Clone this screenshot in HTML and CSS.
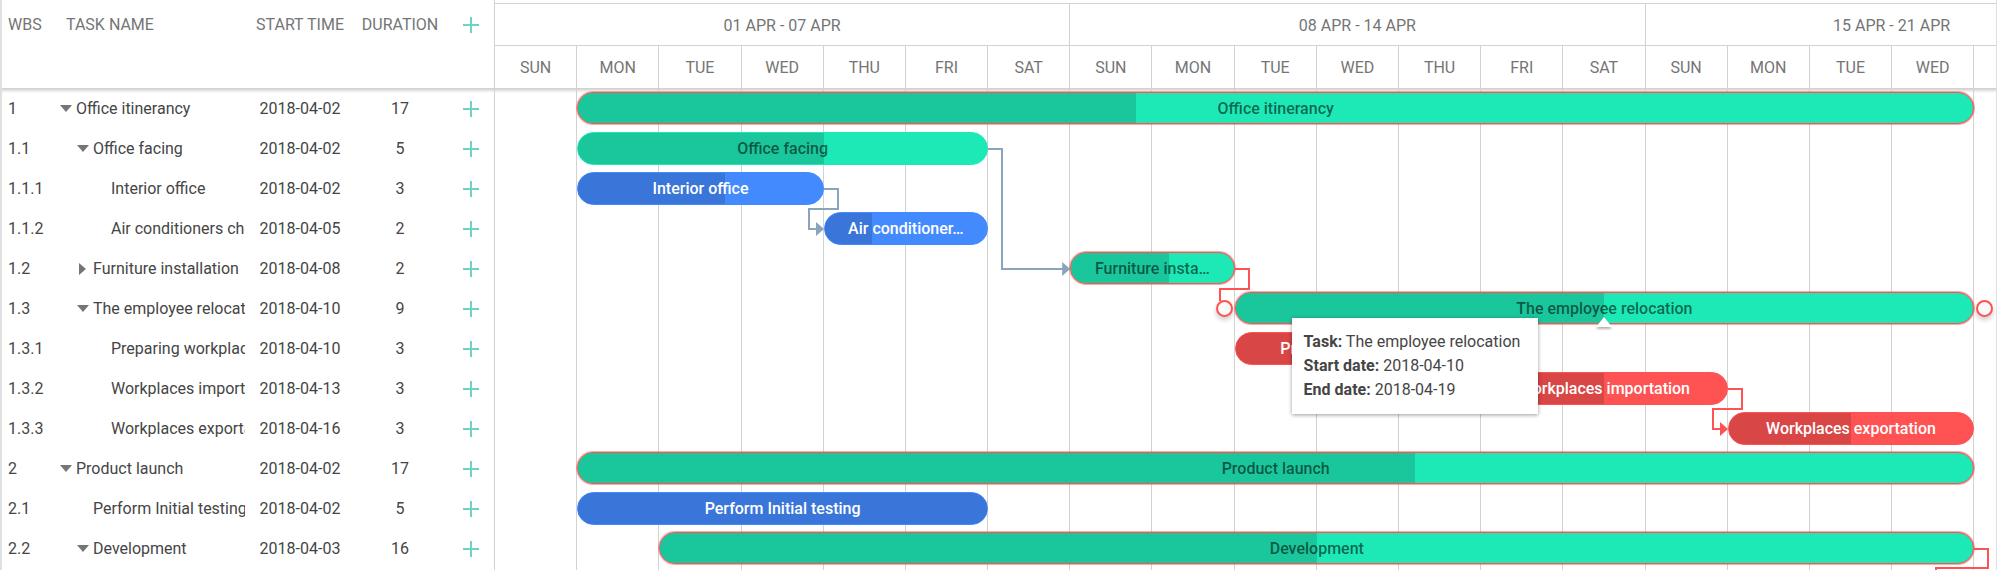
FILE: index.html
```html
<!DOCTYPE html>
<html lang="en">
<head>
<meta charset="utf-8">
<title>Project schedule</title>
<link rel="stylesheet" href="styles.css">
</head>
<body>
<svg class="defs" aria-hidden="true">
  <symbol id="plus" viewBox="0 0 16 16"><path d="M8 0v16M0 8h16" fill="none" stroke="currentColor" stroke-width="2"/></symbol>
  <symbol id="open" viewBox="0 0 12 12"><path d="M0 2h12L6 9z" fill="currentColor"/></symbol>
  <symbol id="closed" viewBox="0 0 12 12"><path d="M2 0v12l7-6z" fill="currentColor"/></symbol>
</svg>
<main class="gantt">
  <table class="tasks">
    <colgroup><col class="c-wbs"><col class="c-name"><col class="c-start"><col class="c-dur"><col class="c-add"></colgroup>
    <thead>
      <tr><th>WBS</th><th>TASK NAME</th><th>START TIME</th><th>DURATION</th><th><button class="add" aria-label="Add task"><svg><use href="#plus"/></svg></button></th></tr>
    </thead>
    <tbody>
      <tr><td>1</td><td><div class="name"><button class="toggle" aria-label="Collapse"><svg><use href="#open"/></svg></button><span>Office itinerancy</span></div></td><td>2018-04-02</td><td>17</td><td><button class="add" aria-label="Add subtask"><svg><use href="#plus"/></svg></button></td></tr>
      <tr><td>1.1</td><td><div class="name level-1"><button class="toggle" aria-label="Collapse"><svg><use href="#open"/></svg></button><span>Office facing</span></div></td><td>2018-04-02</td><td>5</td><td><button class="add" aria-label="Add subtask"><svg><use href="#plus"/></svg></button></td></tr>
      <tr><td>1.1.1</td><td><div class="name level-2 leaf"><span>Interior office</span></div></td><td>2018-04-02</td><td>3</td><td><button class="add" aria-label="Add subtask"><svg><use href="#plus"/></svg></button></td></tr>
      <tr><td>1.1.2</td><td><div class="name level-2 leaf"><span>Air conditioners check</span></div></td><td>2018-04-05</td><td>2</td><td><button class="add" aria-label="Add subtask"><svg><use href="#plus"/></svg></button></td></tr>
      <tr><td>1.2</td><td><div class="name level-1"><button class="toggle" aria-label="Expand"><svg><use href="#closed"/></svg></button><span>Furniture installation</span></div></td><td>2018-04-08</td><td>2</td><td><button class="add" aria-label="Add subtask"><svg><use href="#plus"/></svg></button></td></tr>
      <tr><td>1.3</td><td><div class="name level-1"><button class="toggle" aria-label="Collapse"><svg><use href="#open"/></svg></button><span>The employee relocation</span></div></td><td>2018-04-10</td><td>9</td><td><button class="add" aria-label="Add subtask"><svg><use href="#plus"/></svg></button></td></tr>
      <tr><td>1.3.1</td><td><div class="name level-2 leaf"><span>Preparing workplaces</span></div></td><td>2018-04-10</td><td>3</td><td><button class="add" aria-label="Add subtask"><svg><use href="#plus"/></svg></button></td></tr>
      <tr><td>1.3.2</td><td><div class="name level-2 leaf"><span>Workplaces importation</span></div></td><td>2018-04-13</td><td>3</td><td><button class="add" aria-label="Add subtask"><svg><use href="#plus"/></svg></button></td></tr>
      <tr><td>1.3.3</td><td><div class="name level-2 leaf"><span>Workplaces exportation</span></div></td><td>2018-04-16</td><td>3</td><td><button class="add" aria-label="Add subtask"><svg><use href="#plus"/></svg></button></td></tr>
      <tr><td>2</td><td><div class="name"><button class="toggle" aria-label="Collapse"><svg><use href="#open"/></svg></button><span>Product launch</span></div></td><td>2018-04-02</td><td>17</td><td><button class="add" aria-label="Add subtask"><svg><use href="#plus"/></svg></button></td></tr>
      <tr><td>2.1</td><td><div class="name level-1 leaf"><span>Perform Initial testing</span></div></td><td>2018-04-02</td><td>5</td><td><button class="add" aria-label="Add subtask"><svg><use href="#plus"/></svg></button></td></tr>
      <tr><td>2.2</td><td><div class="name level-1"><button class="toggle" aria-label="Collapse"><svg><use href="#open"/></svg></button><span>Development</span></div></td><td>2018-04-03</td><td>16</td><td><button class="add" aria-label="Add subtask"><svg><use href="#plus"/></svg></button></td></tr>
    </tbody>
  </table>

  <section class="timeline">
    <div class="canvas">
      <header class="scale">
        <div class="days weeks"><span class="week">01 APR - 07 APR</span><span class="week">08 APR - 14 APR</span><span class="week week-cut">15 APR - 21 APR</span></div>
        <div class="days"><span>SUN</span><span>MON</span><span>TUE</span><span>WED</span><span>THU</span><span>FRI</span><span>SAT</span><span>SUN</span><span>MON</span><span>TUE</span><span>WED</span><span>THU</span><span>FRI</span><span>SAT</span><span>SUN</span><span>MON</span><span>TUE</span><span>WED</span><span></span><span></span></div>
      </header>
      <div class="plot">
        <div class="days lines"><i></i><i></i><i></i><i></i><i></i><i></i><i></i><i></i><i></i><i></i><i></i><i></i><i></i><i></i><i></i><i></i><i></i><i></i><i></i><i></i></div>
        <div class="days rows">
          <div class="bar project critical" style="grid-area: 1 / 2 / auto / span 17"><div class="fill"><div style="width: 40%"></div></div><span>Office itinerancy</span></div>
          <div class="bar project" style="grid-area: 2 / 2 / auto / span 5"><div class="fill"><div style="width: 60%"></div></div><span>Office facing</span></div>
          <div class="bar task" style="grid-area: 3 / 2 / auto / span 3"><div class="fill"><div style="width: 60%"></div></div><span>Interior office</span></div>
          <div class="bar task" style="grid-area: 4 / 5 / auto / span 2"><div class="fill"><div style="width: 29%"></div></div><span>Air conditioner…</span></div>
          <div class="bar project critical" style="grid-area: 5 / 8 / auto / span 2"><div class="fill"><div style="width: 60%"></div></div><span>Furniture insta…</span></div>
          <div class="bar project critical" style="grid-area: 6 / 10 / auto / span 9"><div class="fill"><div style="width: 50%"></div></div><span>The employee relocation</span>
            <b class="dot dot-start"></b><b class="dot dot-end"></b>
            <svg class="handle" viewBox="0 0 18 10"><path d="M9 0l8 10H1z" fill="#fff"/></svg>
            <div class="tooltip" role="tooltip"><div><strong>Task:</strong> The employee relocation</div><div><strong>Start date:</strong> 2018-04-10</div><div><strong>End date:</strong> 2018-04-19</div></div>
          </div>
          <div class="bar task critical" style="grid-area: 7 / 10 / auto / span 3"><div class="fill"><div style="width: 50%"></div></div><span>Preparing workplaces</span></div>
          <div class="bar task critical" style="grid-area: 8 / 13 / auto / span 3"><div class="fill"><div style="width: 50%"></div></div><span>Workplaces importation</span></div>
          <div class="bar task critical" style="grid-area: 9 / 16 / auto / span 3"><div class="fill"><div style="width: 50%"></div></div><span>Workplaces exportation</span></div>
          <div class="bar project critical" style="grid-area: 10 / 2 / auto / span 17"><div class="fill"><div style="width: 60%"></div></div><span>Product launch</span></div>
          <div class="bar task" style="grid-area: 11 / 2 / auto / span 5"><div class="fill"><div style="width: 100%"></div></div><span>Perform Initial testing</span></div>
          <div class="bar project critical" style="grid-area: 12 / 3 / auto / span 16"><div class="fill"><div style="width: 50%"></div></div><span>Development</span></div>
        </div>
        <div class="days rows links">
          <svg class="link" style="grid-area: 2 / 7 / span 4 / auto">
            <path d="M0 20h14v120"/>
            <line x1="13" y1="140" x2="95%" y2="140"/>
            <svg x="100%" y="140"><path class="tip" d="M0 0l-8-7v14z"/></svg>
          </svg>
          <svg class="link" style="grid-area: 3 / 5 / span 2 / auto"><path d="M0 20h14v20h-29v20h8"/><path class="tip" d="M0 60l-8-7v14z"/></svg>
          <svg class="link late" style="grid-area: 5 / 10 / span 2 / auto"><path d="M0 20h14v20h-29v12"/></svg>
          <svg class="link late" style="grid-area: 8 / 16 / span 2 / auto"><path d="M0 20h14v20h-29v20h8"/><path class="tip" d="M0 60l-8-7v14z"/></svg>
          <svg class="link late" style="grid-area: 12 / 19"><path d="M0 20h14v19h-52v10"/></svg>
        </div>
      </div>
    </div>
  </section>
</main>
</body>
</html>
```
FILE: styles.css
```css
:root {
  --line: #d2d2d2;
  --row: 40px;
  --grey: #757575;
}

* { box-sizing: border-box; }

body {
  margin: 0;
  font: 16px/24px Roboto, "Liberation Sans", sans-serif;
  color: #454545;
  background: #fff;
  overflow: hidden;
}

.defs { display: none; }

.gantt {
  display: flex;
  min-height: 100vh;
  border-left: 2px solid #e0e0e0;
  border-right: 1px solid #e0e0e0;
}

/* Task list */
.tasks {
  flex: none;
  align-self: flex-start;
  table-layout: fixed;
  width: 492px;
  border-spacing: 0;
}

.c-wbs { width: 58px; }
.c-name { width: 188px; }
.c-start { width: 104px; }
.c-dur { width: 96px; }
.c-add { width: 46px; }

.tasks th {
  height: 89px;
  padding: 13px 0 0;
  vertical-align: top;
  font-weight: 400;
  color: var(--grey);
  white-space: nowrap;
  border-bottom: 1px solid var(--line);
}

.tasks th:nth-child(-n + 2) { text-align: left; padding-left: 6px; }
.tasks td { height: var(--row); padding: 0; text-align: center; }
.tasks td:first-child { text-align: left; padding-left: 6px; }

.tasks tbody tr:first-child td,
.plot {
  background: linear-gradient(rgba(0, 0, 0, .16), transparent 4px) no-repeat;
}

.name {
  display: flex;
  align-items: center;
  gap: 4px;
  margin-right: 3px;
  overflow: hidden;
  white-space: nowrap;
}

.level-1 { padding-left: 17px; }
.level-2 { padding-left: 35px; }
.leaf::before { content: ""; flex: none; width: 12px; }

button {
  padding: 0;
  border: 0;
  background: none;
  cursor: pointer;
}

.toggle { flex: none; height: 12px; color: #757575; }
.toggle svg { display: block; width: 12px; height: 12px; }
.add { display: block; margin: 0 auto; color: #6fd3c3; }
.tasks th .add { margin-top: 4px; }
.add svg { display: block; width: 16px; height: 16px; }

/* Timeline */
.timeline {
  flex: 1;
  min-width: 0;
  overflow: hidden;
  border-left: 1px solid var(--line);
}

.canvas {
  display: flex;
  flex-direction: column;
  width: 109.5%;
  height: 100%;
  padding-top: 3px;
}

.days { display: grid; grid-template-columns: repeat(20, minmax(0, 1fr)); }

.scale { border-bottom: 1px solid var(--line); color: var(--grey); text-align: center; }
.scale .days { border-top: 1px solid var(--line); line-height: 40px; }
.scale .weeks { line-height: 39px; }
.scale span { padding-top: 2px; border-right: 1px solid var(--line); }
.week { grid-column: span 7; }
.week-cut { grid-column: span 6; }

.plot { flex: 1; display: grid; }
.plot > .days { grid-area: 1 / 1; }
.lines i { border-right: 1px solid var(--line); }
.rows { grid-template-rows: repeat(12, var(--row)); align-items: start; }

.bar {
  --bright: #1de9b6;
  --dark: #1ac69b;
  position: relative;
  height: 33px;
  margin-top: 3px;
  border: 1px solid var(--bright);
  border-radius: 17px;
  background: var(--bright);
  font-weight: 500;
  line-height: 32px;
  text-align: center;
  color: rgba(0, 0, 0, .56);
}

.task { --bright: #448aff; --dark: #3a75d9; color: #fff; }
.task.critical { --bright: #ff5252; --dark: #d94646; }

.project.critical {
  height: 32px;
  border-color: #ff5252;
  box-shadow: 0 0 0 1px rgba(255, 82, 82, .5);
}

.fill {
  position: absolute;
  inset: 0;
  overflow: hidden;
  border-radius: 16px;
}

.fill div { height: 100%; background: var(--dark); }

.bar > span {
  position: relative;
  display: block;
  padding: 0 20px;
  overflow: hidden;
  white-space: nowrap;
  text-overflow: ellipsis;
}

.dot {
  position: absolute;
  top: 7px;
  width: 17px;
  height: 17px;
  border: 2px solid #ff5252;
  border-radius: 50%;
  background: #fafafa;
  box-shadow: 0 3px 5px rgba(0, 0, 0, .2);
}

.dot-start { left: -20px; }
.dot-end { right: -20px; }

.handle {
  position: absolute;
  top: 24px;
  left: calc(50% - 9px);
  width: 18px;
  height: 10px;
  overflow: visible;
  filter: drop-shadow(0 2px 1px rgba(0, 0, 0, .3));
}

.tooltip {
  position: absolute;
  z-index: 3;
  top: 25px;
  left: 56px;
  min-width: 246px;
  padding: 12px;
  background: #fff;
  box-shadow: 0 1px 4px rgba(0, 0, 0, .4);
  color: #454545;
  font-weight: 400;
  line-height: 24px;
  text-align: left;
  white-space: nowrap;
}

.tooltip strong { font-weight: 700; }

.links { pointer-events: none; }

.link {
  width: 100%;
  height: 100%;
  overflow: visible;
  fill: none;
  stroke: #8aa4be;
  stroke-width: 2;
}

.link svg { overflow: visible; }
.late { stroke: #ff5252; }
.tip { fill: #8aa4be; stroke: none; }
.late .tip { fill: #ff5252; }
```
